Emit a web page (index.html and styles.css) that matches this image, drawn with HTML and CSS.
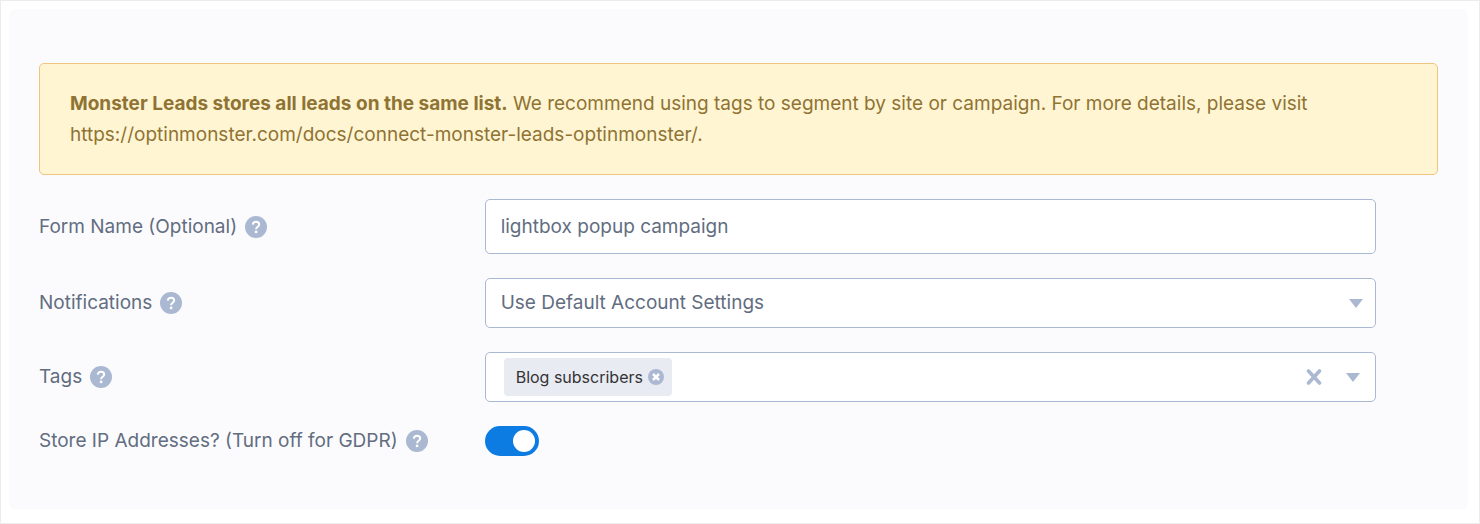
FILE: index.html
```html
<!DOCTYPE html>
<html lang="en">
<head>
<meta charset="utf-8">
<meta name="viewport" content="width=device-width, initial-scale=1">
<title>Monster Leads settings</title>
<link rel="stylesheet" href="styles.css">
</head>
<body>
<svg class="sprite" aria-hidden="true">
  <symbol id="help" viewBox="0 0 22 22">
    <circle cx="11" cy="11" r="11" fill="currentColor"/>
    <path d="M7.8 8.6C8 6.7 9.3 5.8 11 5.8c1.900 0 3.200 1.100 3.200 2.700 0 2.300-3.100 2.300-3.100 4.700" fill="none" stroke="#fff" stroke-width="2"/>
    <circle cx="11.100" cy="15.900" r="1.400" fill="#fff"/>
  </symbol>
</svg>
<main class="panel">
  <p class="notice"><strong>Monster Leads stores all leads on the same list.</strong> We recommend using tags to segment by site or campaign. For more details, please visit <a class="notice-link" href="https://optinmonster.com/docs/connect-monster-leads-optinmonster/">https://optinmonster.com/docs/connect-monster-leads-optinmonster/</a>.</p>
  <form class="form">
    <div class="row">
      <div class="label"><label for="form-name">Form Name (Optional)</label><button class="help" type="button" aria-label="Help: form name"><svg class="help-icon"><use href="#help"/></svg></button></div>
      <input class="control text-input" id="form-name" type="text" value="lightbox popup campaign">
    </div>
    <div class="row">
      <div class="label"><label for="notifications">Notifications</label><button class="help" type="button" aria-label="Help: notifications"><svg class="help-icon"><use href="#help"/></svg></button></div>
      <div class="select-wrap">
        <select class="control select" id="notifications"><option>Use Default Account Settings</option></select>
        <svg class="select-caret caret" viewBox="0 0 14 9" aria-hidden="true"><path d="M0 0h14L7 9z"/></svg>
      </div>
    </div>
    <div class="row">
      <div class="label"><label for="tags">Tags</label><button class="help" type="button" aria-label="Help: tags"><svg class="help-icon"><use href="#help"/></svg></button></div>
      <div class="control tags">
        <span class="tag">Blog subscribers<button class="tag-remove" type="button" aria-label="Remove Blog subscribers"><svg viewBox="0 0 16 16" width="16" height="16"><circle cx="8" cy="8" r="8" fill="#abb8d1"/><path d="M5 5l6 6M11 5l-6 6" stroke="#fff" stroke-width="2.500"/></svg></button></span>
        <input class="tags-input" id="tags" type="text">
        <button class="icon-button" type="button" aria-label="Clear all"><svg viewBox="0 0 16 16" width="16" height="16"><path d="M2.500 2l11 12M13.500 2l-11 12" stroke="#abb8d1" stroke-width="3.600" stroke-linecap="round"/></svg></button>
        <button class="icon-button" type="button" aria-label="Show tags"><svg class="caret" viewBox="0 0 14 9"><path d="M0 0h14L7 9z"/></svg></button>
      </div>
    </div>
    <div class="row">
      <div class="label"><label for="store-ip">Store IP Addresses? (Turn off for GDPR)</label><button class="help" type="button" aria-label="Help: store IP addresses"><svg class="help-icon"><use href="#help"/></svg></button></div>
      <input class="toggle" id="store-ip" type="checkbox" role="switch" checked>
    </div>
  </form>
</main>
</body>
</html>
```

FILE: styles.css
```css
* { box-sizing: border-box; }

body {
  margin: 0;
  min-height: 100vh;
  display: flex;
  padding: 8px 11px 14px 8px;
  border: 1px solid #ececec;
  background: #fff;
  color: #626d80;
  font: 19px/30px Inter, "Liberation Sans", sans-serif;
}

button, input, select { font: inherit; color: inherit; }

button {
  display: flex;
  padding: 0;
  border: 0;
  background: none;
  cursor: pointer;
}

.sprite { position: absolute; width: 0; height: 0; }

.panel {
  flex: 1;
  min-width: 0;
  padding: 54px 30px 53px;
  border-radius: 6px;
  background: #fbfbfe;
}

.notice {
  margin: 0 0 24px;
  padding: 24px 30px;
  border: 1px solid #edc57c;
  border-radius: 5px;
  background: #fff5d3;
  color: #8f7333;
  line-height: 31px;
}

.notice-link { color: inherit; text-decoration: none; }

.form { display: grid; gap: 24px; padding-right: 62px; }

.row {
  display: grid;
  grid-template-columns: 1fr 2fr;
  align-items: center;
}

.label { display: flex; align-items: center; gap: 8px; }

.help { color: #abb8d1; }

.help-icon { width: 22px; height: 22px; }

.control {
  width: 100%;
  height: 50px;
  border: 1px solid #abb8d1;
  border-radius: 5px;
  background: #fff;
}

.text-input { height: 55px; padding: 0 15px; }

.select-wrap { display: grid; align-items: center; }

.select, .select-caret { grid-area: 1 / 1; }

.select { appearance: none; padding: 0 40px 0 15px; }

.select-caret { justify-self: end; margin-right: 13px; pointer-events: none; }

.caret { width: 14px; height: 9px; fill: #abb8d1; }

.tags {
  display: flex;
  align-items: center;
  gap: 24px;
  padding: 0 15px 0 18px;
}

.tag {
  display: flex;
  align-items: center;
  gap: 5px;
  height: 38px;
  padding: 0 8px 0 12px;
  border-radius: 4px;
  background: #e9ebf3;
  color: #333;
  font-size: 16px;
  white-space: nowrap;
}

.tags-input {
  flex: 1;
  min-width: 0;
  border: 0;
  outline: 0;
  background: none;
}

.toggle {
  appearance: none;
  display: flex;
  width: 54px;
  height: 30px;
  margin: 0;
  padding: 4px;
  border-radius: 15px;
  background: #abb8d1;
  cursor: pointer;
}

.toggle::before {
  content: "";
  width: 22px;
  height: 22px;
  border-radius: 50%;
  background: #fff;
}

.toggle:checked { justify-content: flex-end; background: #0c7ce3; }
```
